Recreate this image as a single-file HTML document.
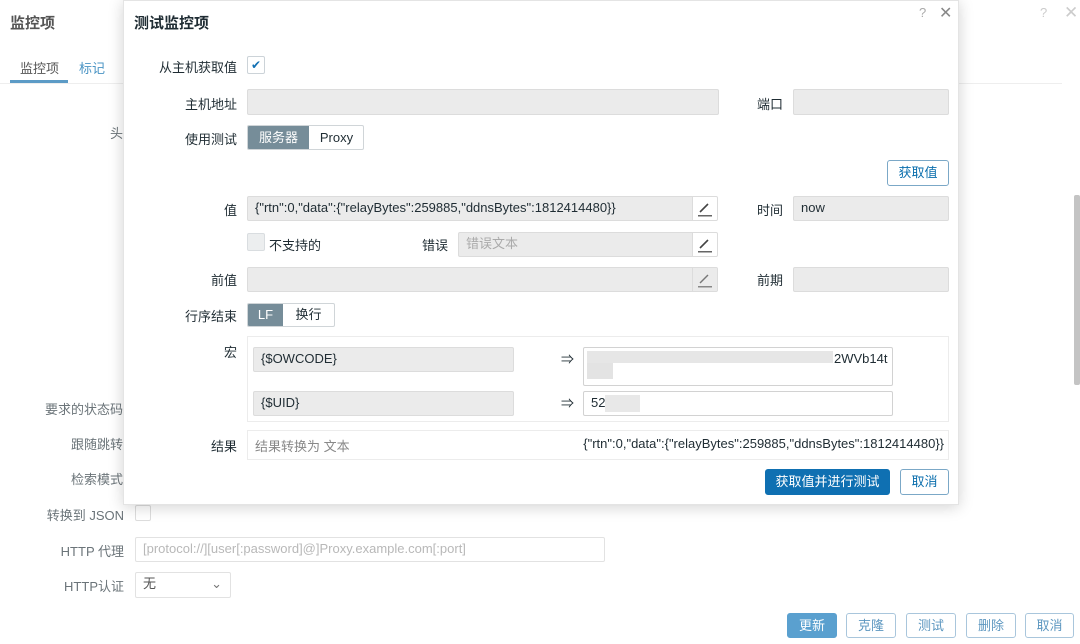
<!DOCTYPE html>
<html><head><meta charset="utf-8"><style>
*{box-sizing:border-box;margin:0;padding:0}
body{width:1080px;height:644px;overflow:hidden;background:#fff;font-family:"Liberation Sans","Noto Sans CJK SC",sans-serif;font-size:13px;color:#1f2c33;position:relative}
.a{position:absolute}
.bg{color:#6b7479}
.lbl{position:absolute;text-align:right;white-space:nowrap}
.in{position:absolute;background:#ebebeb;border:1px solid #dcdcdc;border-radius:2px;padding-left:7px;line-height:22px;white-space:nowrap;overflow:hidden}
.wh{background:#fff;border:1px solid #d2d2d2}
.btn{position:absolute;border:1px solid #7ba8c7;border-radius:3px;color:#0a6ead;text-align:center;background:#fff}
.pen{position:absolute;width:25px;border-left:1px solid #dcdcdc;background:#fff;top:0;bottom:0;right:0}
.chk{position:absolute;width:18px;height:18px;border:1px solid #d9dde0;border-radius:2px;background:#eceeef}
#dlg{position:absolute;left:123px;top:0;width:836px;height:505px;background:#fff;box-shadow:0 2px 14px rgba(0,0,0,.18);border:1px solid #e4e4e4;overflow:hidden}
#dl{position:absolute;left:-124px;top:-1px;width:1080px;height:644px}
</style></head><body>
<div class="a bg" style="left:10px;top:12px;font-size:15px;color:#555;font-weight:bold">监控项</div>
<div class="a bg" style="left:20px;top:58px;color:#555">监控项</div>
<div class="a" style="left:79px;top:58px;color:#4a94c4">标记</div>
<div class="a" style="left:10px;top:80px;width:58px;height:3px;background:#5c9bc6"></div>
<div class="a" style="left:0;top:83px;width:1062px;height:1px;background:#eee"></div>
<div class="lbl bg" style="right:957px;top:123px">头</div>
<div class="lbl bg" style="right:957px;top:399px">要求的状态码</div>
<div class="lbl bg" style="right:957px;top:434px">跟随跳转</div>
<div class="lbl bg" style="right:957px;top:469px">检索模式</div>
<div class="lbl bg" style="right:956px;top:505px">转换到 JSON</div>
<div class="a" style="left:135px;top:505px;width:16px;height:16px;border:1px solid #ddd;border-radius:2px"></div>
<div class="lbl bg" style="right:956px;top:541px">HTTP 代理</div>
<div class="in wh" style="left:135px;top:537px;width:470px;height:25px;color:#b8b8b8;border-color:#e2e2e2">[protocol://][user[:password]@]Proxy.example.com[:port]</div>
<div class="lbl bg" style="right:956px;top:576px">HTTP认证</div>
<div class="in wh" style="left:135px;top:572px;width:96px;height:26px;color:#555;border-color:#e2e2e2">无<span style="position:absolute;right:8px;top:0;color:#777">⌄</span></div>
<div class="a" style="left:1040px;top:5px;color:#ccc;font-size:13px">?</div>
<div class="a" style="left:1064px;top:3px;color:#ccc;font-size:17px">✕</div>
<div class="a" style="left:1074px;top:195px;width:6px;height:190px;background:#c4c4c4;border-radius:2px"></div>
<div class="btn" style="left:787px;top:613px;width:50px;height:25px;line-height:23px;background:#5aa0cf;border-color:#5aa0cf;color:#fff">更新</div>
<div class="btn" style="left:846px;top:613px;width:50px;height:25px;line-height:23px;color:#5d97c0;border-color:#a9c6dc">克隆</div>
<div class="btn" style="left:906px;top:613px;width:50px;height:25px;line-height:23px;color:#5d97c0;border-color:#a9c6dc">测试</div>
<div class="btn" style="left:966px;top:613px;width:50px;height:25px;line-height:23px;color:#5d97c0;border-color:#a9c6dc">删除</div>
<div class="btn" style="left:1025px;top:613px;width:49px;height:25px;line-height:23px;color:#5d97c0;border-color:#a9c6dc">取消</div>

<div id="dlg"><div id="dl">
<div class="a" style="left:134px;top:12px;font-size:15px;font-weight:bold">测试监控项</div>
<div class="a" style="left:919px;top:5px;color:#aaa">?</div>
<div class="a" style="left:939px;top:3px;color:#888;font-size:16px">✕</div>

<div class="lbl" style="right:843px;top:57px">从主机获取值</div>
<div class="a" style="left:247px;top:56px;width:18px;height:18px;border:1px solid #ccd3d8;border-radius:2px;color:#1270b3;font-size:12px;line-height:16px;text-align:center">✔</div>

<div class="lbl" style="right:843px;top:94px">主机地址</div>
<div class="in" style="left:247px;top:89px;width:472px;height:26px"></div>
<div class="lbl" style="right:297px;top:94px">端口</div>
<div class="in" style="left:793px;top:89px;width:156px;height:26px"></div>

<div class="lbl" style="right:843px;top:129px">使用测试</div>
<div class="a" style="left:247px;top:125px;width:117px;height:25px;border:1px solid #d0d5d8;border-radius:2px;overflow:hidden">
<div class="a" style="left:0;top:0;width:61px;height:23px;background:#768d99;color:#fff;text-align:center;line-height:23px">服务器</div>
<div class="a" style="left:61px;top:0;width:55px;height:23px;text-align:center;line-height:23px">Proxy</div></div>

<div class="btn" style="left:887px;top:160px;width:62px;height:26px;line-height:24px">获取值</div>

<div class="lbl" style="right:843px;top:200px">值</div>
<div class="in" style="left:247px;top:196px;width:471px;height:25px">{"rtn":0,"data":{"relayBytes":259885,"ddnsBytes":1812414480}}<div class="pen"><svg width="24" height="23" viewBox="0 0 24 23"><path d="M7 15 L15 7" stroke="#444" stroke-width="1.6"/><rect x="5" y="18" width="14" height="1.5" fill="#666"/></svg></div></div>
<div class="lbl" style="right:297px;top:200px">时间</div>
<div class="in" style="left:793px;top:196px;width:156px;height:25px">now</div>

<div class="chk" style="left:247px;top:233px"></div>
<div class="a" style="left:269px;top:235px">不支持的</div>
<div class="lbl" style="right:632px;top:235px">错误</div>
<div class="in" style="left:458px;top:232px;width:260px;height:25px;color:#aaa">错误文本<div class="pen"><svg width="24" height="23" viewBox="0 0 24 23"><path d="M7 15 L15 7" stroke="#444" stroke-width="1.6"/><rect x="5" y="18" width="14" height="1.5" fill="#666"/></svg></div></div>

<div class="lbl" style="right:843px;top:270px">前值</div>
<div class="in" style="left:247px;top:267px;width:471px;height:25px"><div class="pen" style="background:#ebebeb"><svg width="24" height="23" viewBox="0 0 24 23"><path d="M7 15 L15 7" stroke="#777" stroke-width="1.4"/><rect x="5" y="18" width="14" height="1.5" fill="#888"/></svg></div></div>
<div class="lbl" style="right:297px;top:270px">前期</div>
<div class="in" style="left:793px;top:267px;width:156px;height:25px"></div>

<div class="lbl" style="right:843px;top:306px">行序结束</div>
<div class="a" style="left:247px;top:303px;width:88px;height:24px;border:1px solid #d0d5d8;border-radius:2px;overflow:hidden">
<div class="a" style="left:0;top:0;width:35px;height:22px;background:#768d99;color:#fff;text-align:center;line-height:22px">LF</div>
<div class="a" style="left:35px;top:0;width:51px;height:22px;text-align:center;line-height:22px">换行</div></div>

<div class="lbl" style="right:843px;top:342px">宏</div>
<div class="a" style="left:247px;top:336px;width:702px;height:86px;border:1px solid #ececec"></div>
<div class="in" style="left:253px;top:347px;width:261px;height:25px">{$OWCODE}</div>
<div class="a" style="left:561px;top:349px">⇒</div>
<div class="in wh" style="left:583px;top:347px;width:310px;height:39px;line-height:22px">
<div class="a" style="left:3px;top:3px;width:246px;height:12px;background:#e6e6e6"></div>
<div class="a" style="left:3px;top:15px;width:26px;height:16px;background:#e3e3e3"></div>
<div class="a" style="left:250px;top:0">2WVb14t</div></div>
<div class="in" style="left:253px;top:391px;width:261px;height:25px">{$UID}</div>
<div class="a" style="left:561px;top:393px">⇒</div>
<div class="in wh" style="left:583px;top:391px;width:310px;height:25px">52<span style="display:inline-block;width:35px;height:17px;background:#e8e8e8;vertical-align:middle"></span></div>

<div class="lbl" style="right:843px;top:436px">结果</div>
<div class="a" style="left:247px;top:430px;width:702px;height:30px;border:1px solid #ececec"></div>
<div class="a" style="left:255px;top:436px;color:#888">结果转换为 文本</div>
<div class="lbl" style="right:136px;top:436px">{"rtn":0,"data":{"relayBytes":259885,"ddnsBytes":1812414480}}</div>

<div class="btn" style="left:765px;top:469px;width:125px;height:26px;line-height:24px;background:#0f70b2;border-color:#0f70b2;color:#fff">获取值并进行测试</div>
<div class="btn" style="left:900px;top:469px;width:49px;height:26px;line-height:24px">取消</div>
</div></div>
</body></html>
